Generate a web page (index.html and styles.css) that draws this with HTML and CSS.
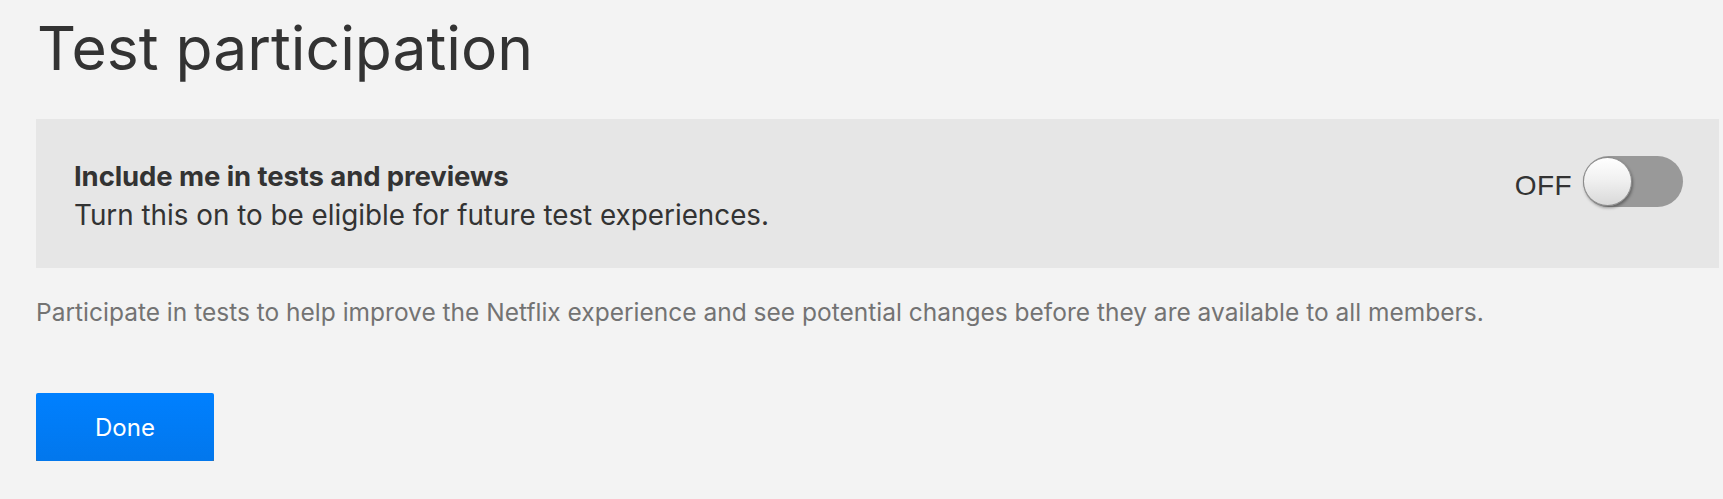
FILE: index.html
```html
<!DOCTYPE html>
<html lang="en">
<head>
<meta charset="utf-8">
<title>Test participation</title>
<link rel="stylesheet" href="styles.css">
</head>
<body>
<main class="page">
  <h1 class="title">Test participation</h1>
  <section class="setting">
    <div class="setting-text">
      <div class="setting-label">Include me in tests and previews</div>
      <div class="setting-desc">Turn this on to be eligible for future test experiences.</div>
    </div>
    <div class="toggle-wrap">
      <span class="toggle-state">OFF</span>
      <span class="toggle" role="switch" aria-checked="false"><span class="toggle-knob"></span></span>
    </div>
  </section>
  <p class="note">Participate in tests to help improve the Netflix experience and see potential changes before they are available to all members.</p>
  <button class="btn-done" type="button">Done</button>
</main>
</body>
</html>
```
FILE: styles.css
```css
html, body {
  margin: 0;
  padding: 0;
  background: #f3f3f3;
}
body {
  font-family: Inter, "Open Sans", Roboto, sans-serif;
  color: #333333;
}
.page {
  display: flex;
  flex-direction: column;
  align-items: flex-start;
  padding: 12px 4px 0 36px;
}
.title {
  margin: 0;
  font-size: 60.6px;
  line-height: 72px;
  font-weight: 400;
  color: #333333;
  padding-left: 1px;
}
.setting {
  align-self: stretch;
  margin-top: 35px;
  background: #e6e6e6;
  display: flex;
  justify-content: space-between;
  align-items: flex-start;
  padding: 38px 36px 34px 38px;
}
.setting-text {
  display: flex;
  flex-direction: column;
  padding-top: 1px;
}
.setting-label {
  font-size: 27.5px;
  font-weight: 700;
  line-height: 37px;
  letter-spacing: -0.1px;
}
.setting-desc {
  font-size: 27.8px;
  font-weight: 400;
  line-height: 37px;
  margin-top: 2px;
}
.toggle-wrap {
  display: flex;
  align-items: center;
  gap: 11px;
  margin-top: -1px;
}
.toggle-state {
  font-family: "Liberation Sans", Arial, sans-serif;
  font-size: 28px;
  color: #333333;
  padding-top: 9px;
  letter-spacing: 0.4px;
}
.toggle {
  position: relative;
  display: block;
  width: 100px;
  height: 51px;
  border-radius: 26px;
  background: #999999;
}
.toggle-knob {
  position: absolute;
  left: 0;
  top: 1px;
  width: 47px;
  height: 47px;
  border-radius: 50%;
  border: 1px solid #8a8a8a;
  background: linear-gradient(to bottom, #ffffff 0%, #f1f1f1 45%, #d9d9d9 100%);
  box-shadow: 1px 2px 3px rgba(0, 0, 0, 0.35);
}
.note {
  margin: 26px 0 0;
  font-size: 24.5px;
  line-height: 36px;
  color: #737373;
}
.btn-done {
  margin-top: 63px;
  width: 178px;
  height: 68px;
  border: 0;
  border-radius: 2px;
  background-color: #0080ff;
  background-image: linear-gradient(to bottom, #0080ff, #0277ec);
  box-shadow: 0 2px 0 rgba(0, 0, 0, 0.55);
  color: #ffffff;
  font-family: Inter, "Open Sans", Roboto, sans-serif;
  font-size: 24px;
  font-weight: 400;
  padding: 0;
  cursor: pointer;
}
```
